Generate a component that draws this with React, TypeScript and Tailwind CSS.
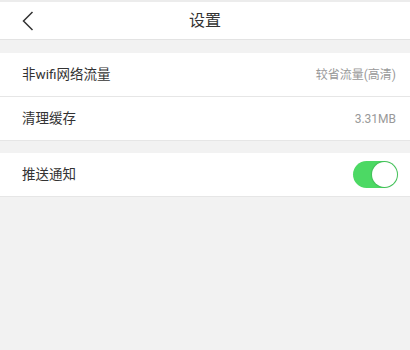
import React from "react";

const font = { fontFamily: '"Roboto", "Noto Sans CJK SC", sans-serif' };

function Row({ label, children }: { label: string; children?: React.ReactNode }) {
  return (
    <div className="flex items-center justify-between h-[44px] pl-[22px] pr-[14px] bg-white border-b border-[#e6e6e6]">
      <span className="text-[13.5px] text-[#333]">{label}</span>
      {children}
    </div>
  );
}

export default function App() {
  return (
    <div className="w-[410px] h-[350px] bg-[#f2f2f2] overflow-hidden" style={font}>
      <div className="relative h-[40px] bg-white border-b border-[#e3e3e3] border-t-2 border-t-[#ececec] flex items-center justify-center">
        <svg className="absolute left-[22px] top-[9px]" width="12" height="20" viewBox="0 0 12 20" fill="none">
          <path d="M10.5 1 L1.5 10 L10.5 19" stroke="#333" strokeWidth="1.5" />
        </svg>
        <span className="text-[16px] text-[#333]">设置</span>
      </div>
      <div className="h-[13px]" />
      <Row label="非wifi网络流量">
        <span className="text-[12px] text-[#999]">较省流量(高清)</span>
      </Row>
      <Row label="清理缓存">
        <span className="text-[12px] text-[#999]">3.31MB</span>
      </Row>
      <div className="h-[12px]" />
      <Row label="推送通知">
        <div className="w-[45px] h-[27px] rounded-full bg-[#4cd964] relative mr-[-2px]">
          <div className="absolute right-[1px] top-[1px] w-[25px] h-[25px] rounded-full bg-white shadow-[0_0_1px_1px_rgba(0,0,0,0.12)]" />
        </div>
      </Row>
    </div>
  );
}
